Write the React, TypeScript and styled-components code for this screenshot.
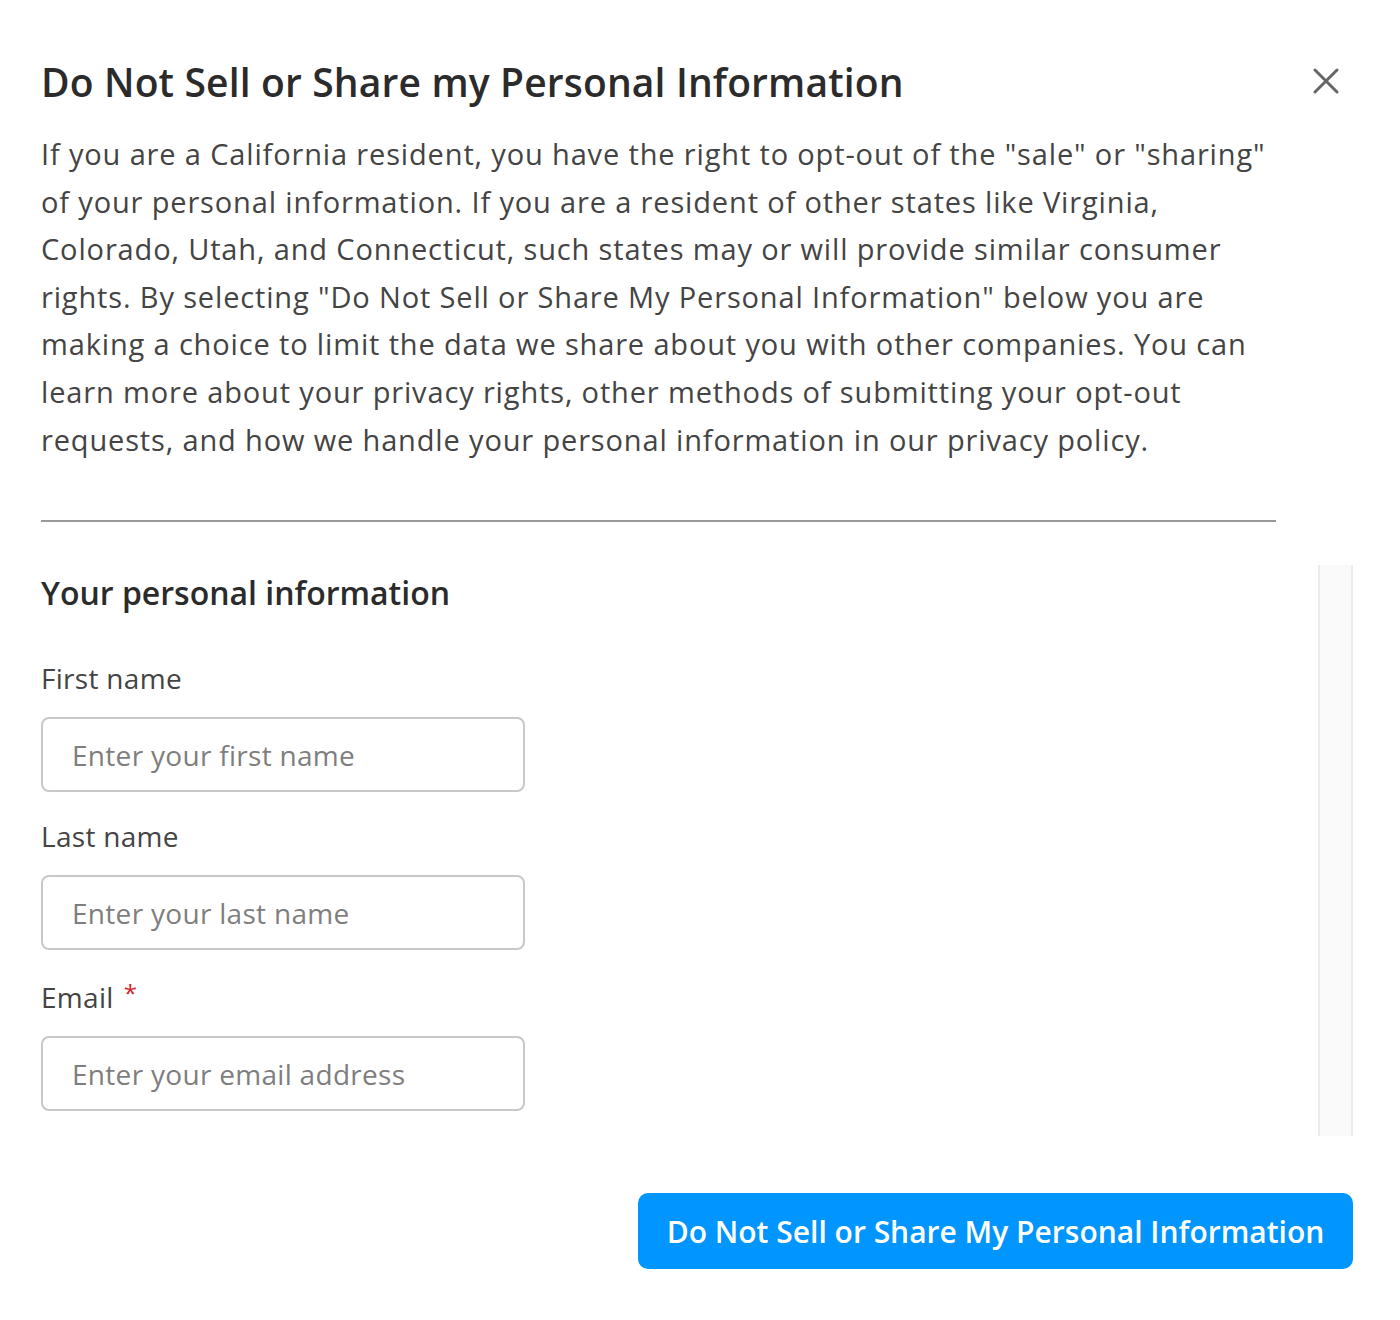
import React from "react";
import styled, { createGlobalStyle } from "styled-components";

const Global = createGlobalStyle`
  html, body { margin: 0; padding: 0; background: #ffffff; }
  body { font-family: "Open Sans", "Noto Sans", sans-serif; color: #333; }
  * { box-sizing: border-box; }
`;

const Dialog = styled.div`
  width: 1400px;
  padding: 56px 47px 50px 41px;
  display: flex;
  flex-direction: column;
`;

const Header = styled.div`
  display: flex;
  align-items: center;
  justify-content: space-between;
  height: 50px;
`;

const Title = styled.h1`
  margin: 0;
  font-size: 39px;
  font-weight: 600;
  color: #2b2b2b;
  letter-spacing: 0.15px;
`;

const Close = styled.button`
  border: 0;
  background: none;
  padding: 0;
  margin-right: 14px;
  width: 26px;
  height: 26px;
  display: flex;
  align-items: center;
  justify-content: center;
  cursor: pointer;
`;

const Intro = styled.p`
  margin: 24px 0 0 0;
  width: 1235px;
  font-size: 29px;
  line-height: 47.6px;
  color: #444;
  white-space: nowrap;
  letter-spacing: 0.85px;
`;

const Divider = styled.hr`
  width: 1235px;
  margin: 57px 0 0 0;
  border: 0;
  border-top: 2px solid #999;
`;

const ScrollArea = styled.div`
  margin-top: 43px;
  display: flex;
  height: 571px;
`;

const FormBody = styled.div`
  flex: 1;
  display: flex;
  flex-direction: column;
`;

const Track = styled.div`
  width: 35px;
  background: #fafafa;
  border-left: 2px solid #ececec;
  border-right: 2px solid #ececec;
`;

const SectionTitle = styled.h2`
  margin: 8px 0 0 0;
  font-size: 32px;
  font-weight: 600;
  color: #2b2b2b;
  line-height: 40px;
`;

const Field = styled.div<{ $top: number }>`
  margin-top: ${(p) => p.$top}px;
  display: flex;
  flex-direction: column;
`;

const Label = styled.label`
  font-size: 28px;
  color: #444;
  line-height: 34px;
  letter-spacing: 0.3px;
`;

const Required = styled.span`
  color: #d0262b;
  margin-left: 10px;
  font-size: 24px;
  vertical-align: top;
  position: relative;
  top: -4px;
`;

const Input = styled.input`
  margin-top: 22px;
  width: 484px;
  height: 75px;
  border: 2px solid #c8c8c8;
  border-radius: 8px;
  padding: 0 29px;
  font-family: inherit;
  font-size: 28px;
  letter-spacing: 0.3px;
  color: #333;
  outline: none;
  &::placeholder {
    color: #7e7e7e;
  }
`;

const Footer = styled.div`
  margin-top: 57px;
  display: flex;
  justify-content: flex-end;
`;

const Primary = styled.button`
  width: 715px;
  height: 76px;
  border: 0;
  border-radius: 10px;
  background: #0095ff;
  color: #fff;
  font-family: inherit;
  font-size: 30px;
  font-weight: 600;
  cursor: pointer;
`;

export default function App() {
  return (
    <>
      <Global />
      <Dialog>
        <Header>
          <Title>Do Not Sell or Share my Personal Information</Title>
          <Close aria-label="Close">
            <svg width="26" height="26" viewBox="0 0 26 26">
              <path d="M2 2 L24 24 M24 2 L2 24" stroke="#666" strokeWidth="3" strokeLinecap="round" />
            </svg>
          </Close>
        </Header>
        <Intro>
          If you are a California resident, you have the right to opt-out of the "sale" or "sharing"
          <br />
          of your personal information. If you are a resident of other states like Virginia,
          <br />
          Colorado, Utah, and Connecticut, such states may or will provide similar consumer
          <br />
          rights. By selecting "Do Not Sell or Share My Personal Information" below you are
          <br />
          making a choice to limit the data we share about you with other companies. You can
          <br />
          learn more about your privacy rights, other methods of submitting your opt-out
          <br />
          requests, and how we handle your personal information in our privacy policy.
        </Intro>
        <Divider />
        <ScrollArea>
          <FormBody>
            <SectionTitle>Your personal information</SectionTitle>
            <Field $top={48}>
              <Label htmlFor="fn">First name</Label>
              <Input id="fn" placeholder="Enter your first name" />
            </Field>
            <Field $top={27}>
              <Label htmlFor="ln">Last name</Label>
              <Input id="ln" placeholder="Enter your last name" />
            </Field>
            <Field $top={30}>
              <Label htmlFor="em">
                Email<Required>*</Required>
              </Label>
              <Input id="em" placeholder="Enter your email address" />
            </Field>
          </FormBody>
          <Track />
        </ScrollArea>
        <Footer>
          <Primary>Do Not Sell or Share My Personal Information</Primary>
        </Footer>
      </Dialog>
    </>
  );
}
